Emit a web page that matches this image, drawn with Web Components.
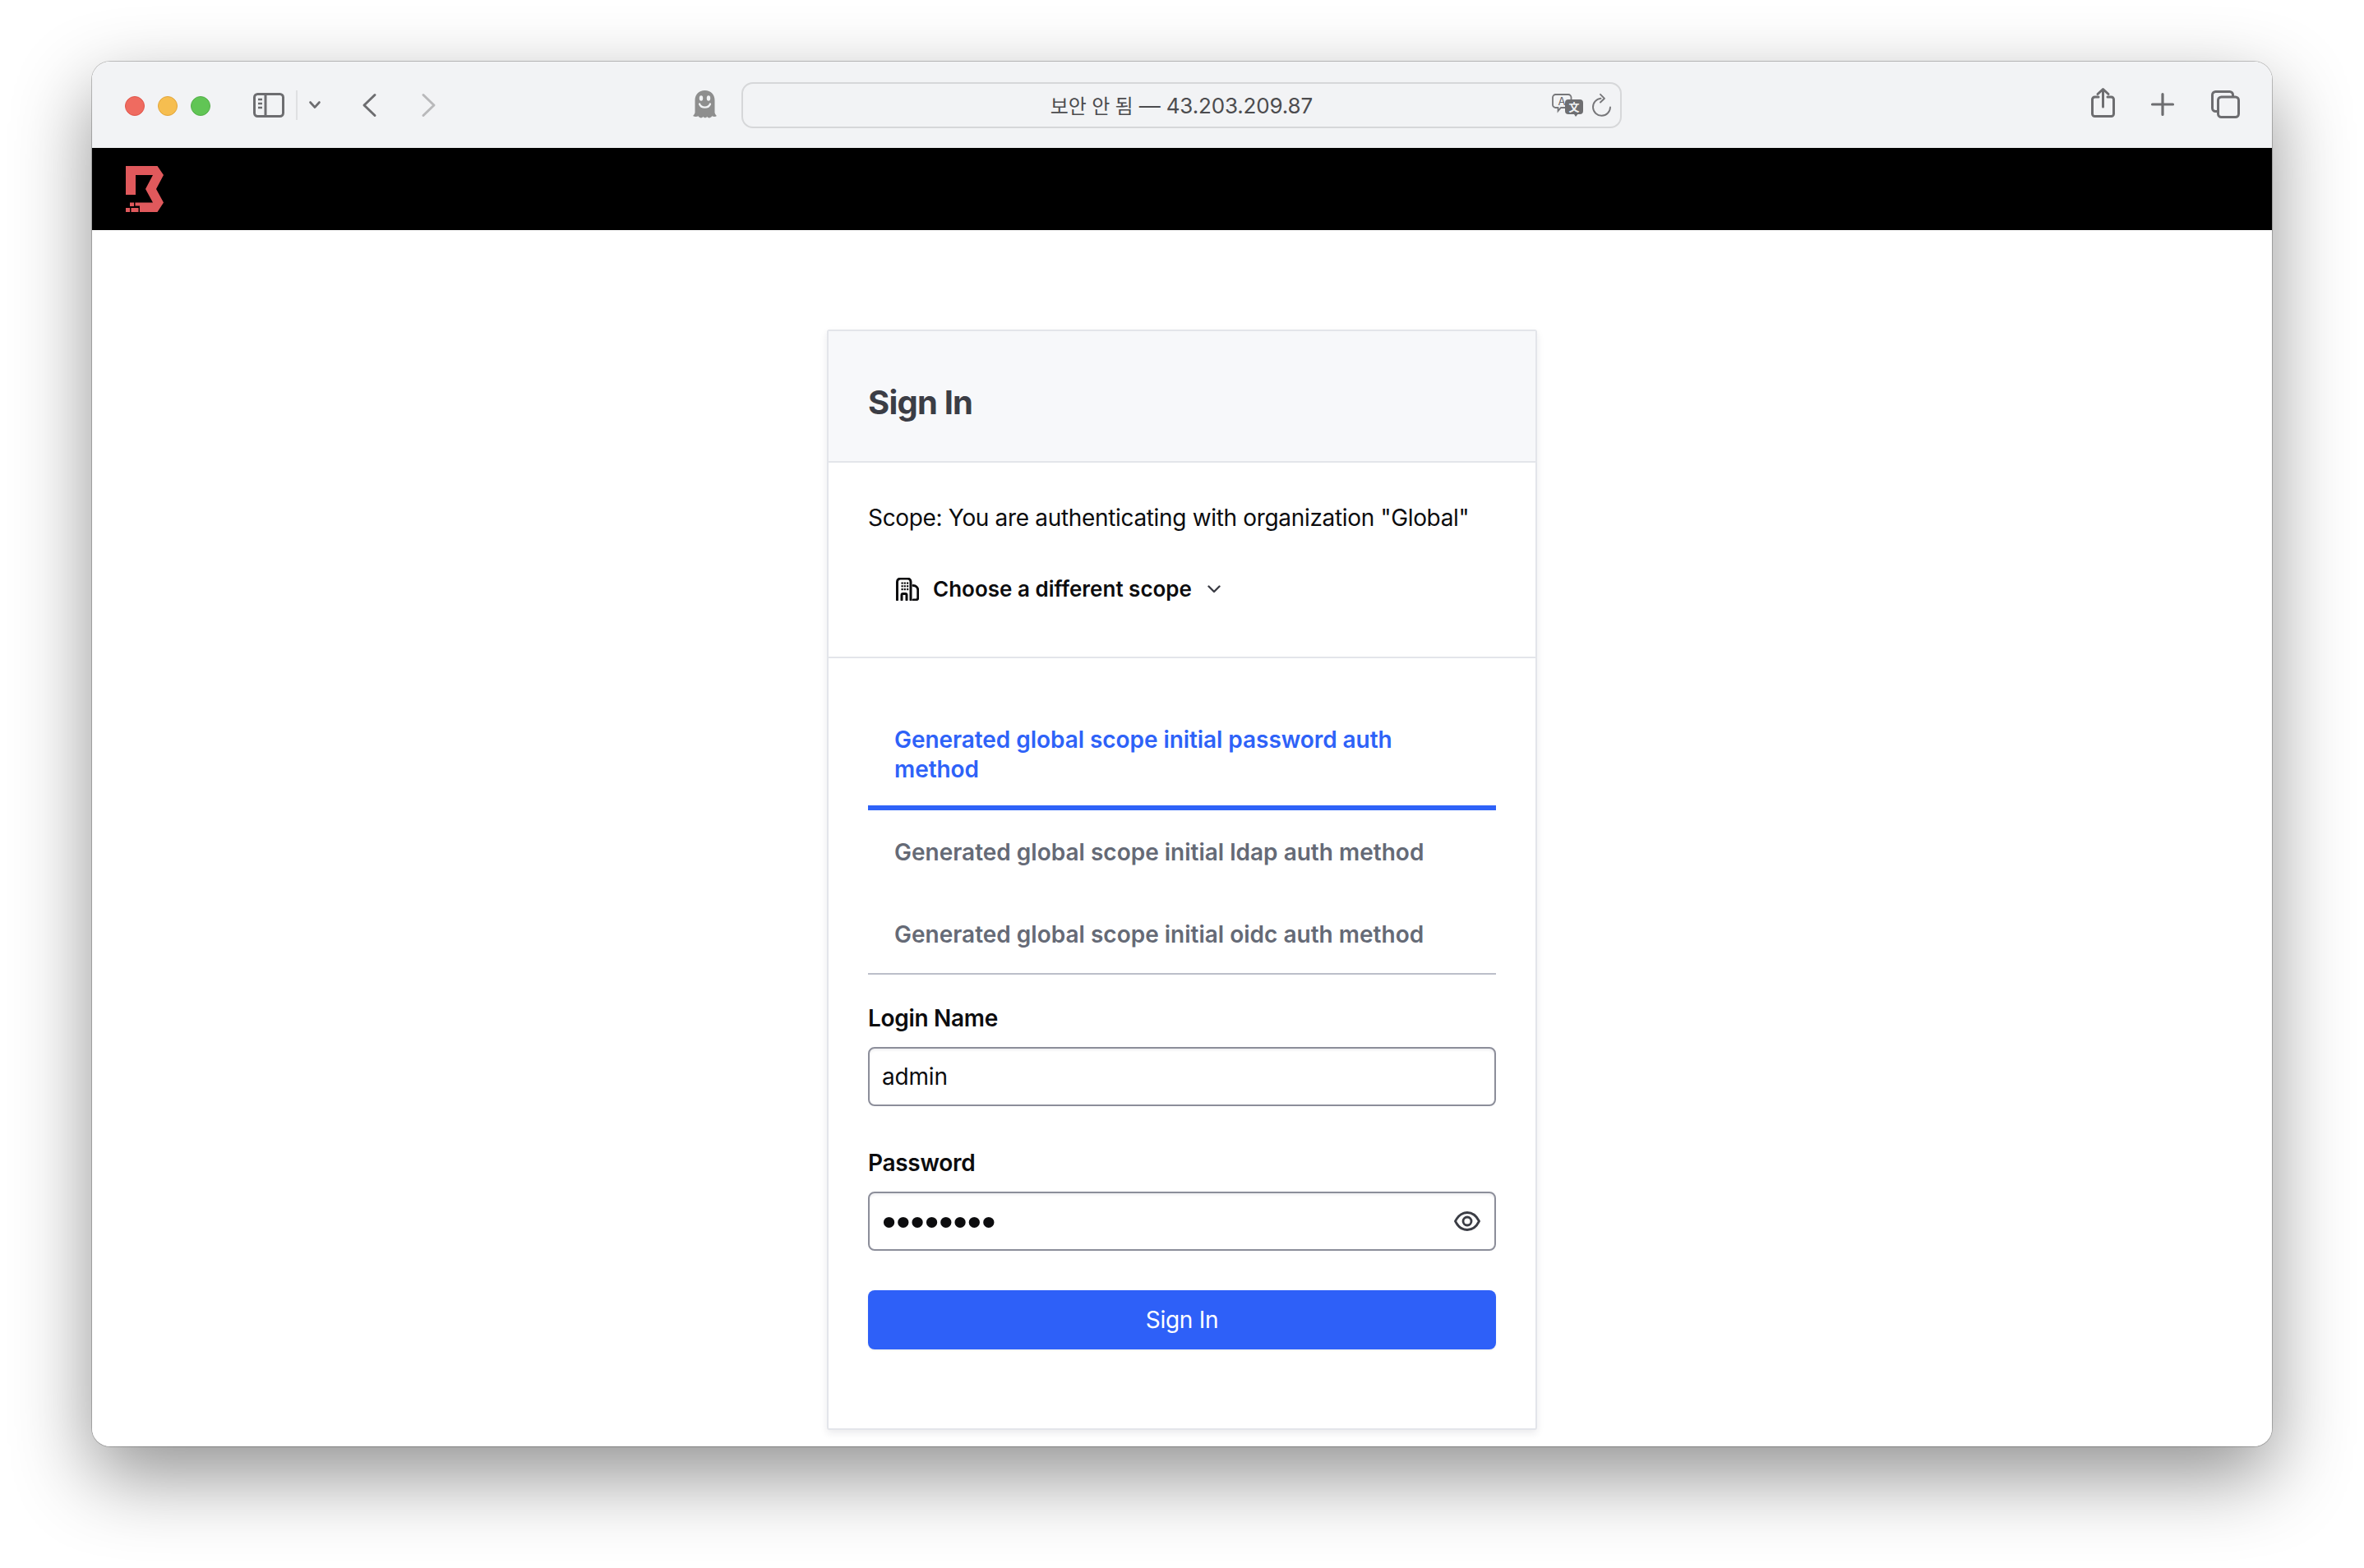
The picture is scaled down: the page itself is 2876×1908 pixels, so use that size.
<!doctype html>
<html lang="en">
<head>
<meta charset="utf-8">
<title>Sign In</title>
<style>
  html, body { margin: 0; background: #fff; }
  body { font-family: Inter, "Noto Sans CJK KR", sans-serif; }
</style>
</head>
<body>
<browser-window>
  <browser-toolbar slot="toolbar" notice="보안 안 됨" address="43.203.209.87"></browser-toolbar>
  <site-header slot="header"></site-header>
  <sign-in-card heading="Sign In">
    <scope-picker slot="scope" org="Global" label="Choose a different scope"></scope-picker>
    <auth-tabs slot="tabs">
      <auth-tab active>Generated global scope initial password auth method</auth-tab>
      <auth-tab>Generated global scope initial ldap auth method</auth-tab>
      <auth-tab>Generated global scope initial oidc auth method</auth-tab>
    </auth-tabs>
    <form-field label="Login Name">admin</form-field>
    <form-field label="Password" secret>••••••••</form-field>
    <submit-button>Sign In</submit-button>
  </sign-in-card>
</browser-window>

<script>
class BrowserWindow extends HTMLElement {
  constructor() {
    super()
    this.attachShadow({ mode: 'open' })
    this.shadowRoot.innerHTML = `
      <style>
        :host { display: block; padding: 75px 112px 148px; }
        .win {
          height: 1685px;
          border-radius: 22px;
          overflow: hidden;
          background: #fff;
        }
        .frame {
          border-radius: 22px;
          box-shadow: 0 0 0 1px rgba(0,0,0,.22), 0 36px 95px rgba(0,0,0,.43);
        }
        main { display: flex; justify-content: center; padding-top: 121px; }
      </style>
      <div class="frame">
        <div class="win">
          <slot name="toolbar"></slot>
          <slot name="header"></slot>
          <main><slot></slot></main>
        </div>
      </div>
    `
  }
}

class BrowserToolbar extends HTMLElement {
  constructor() {
    super()
    this.attachShadow({ mode: 'open' })
  }

  connectedCallback() {
    const notice = this.getAttribute('notice') ?? ''
    const address = this.getAttribute('address') ?? ''
    this.shadowRoot.innerHTML = `
      <style>
        :host {
          display: flex;
          align-items: center;
          height: 105px;
          box-sizing: border-box;
          background: #f2f3f5;
          padding: 0 39px 0 40px;
          color: #6d6d70;
        }
        svg { display: block; flex: none; overflow: visible; }
        .lights { display: flex; gap: 16px; margin-top: 3px; }
        .lights i { width: 24px; height: 24px; border-radius: 50%; box-sizing: border-box; border: 1px solid; }
        .red { background: #ef6b60; border-color: #e0554a !important; }
        .yellow { background: #f6be50; border-color: #e2a53a !important; }
        .green { background: #61c555; border-color: #53ad48 !important; }
        .sidebar { margin-left: 52px; }
        .sep { width: 2px; height: 36px; background: #dfe0e2; margin-left: 14px; }
        .drop { margin-left: 14px; }
        .back { margin-left: 51px; }
        .fwd { margin-left: 55px; color: #b9b9bb; }
        .ghost { margin-left: 313px; margin-bottom: 2px; }
        .address {
          flex: none;
          display: flex;
          align-items: center;
          justify-content: center;
          position: relative;
          width: 1071px;
          height: 56px;
          box-sizing: border-box;
          margin: 0 0 0 30px;
          border: 2px solid #d6d7d9;
          border-radius: 14px;
          font: 400 26px Inter, "Noto Sans CJK KR", sans-serif;
          color: #4c4c4f;
          letter-spacing: -.15px;
        }
        .notice { font-size: 24px; letter-spacing: -.2px; }
        .address-tools {
          position: absolute; right: 11px; top: 12px;
          display: flex; align-items: center; gap: 11px;
        }
        .end { margin-left: auto; margin-bottom: 2px; display: flex; align-items: center; gap: 45px; }
        .share { margin: 0 -1px 3px 0; }
        svg text { font-family: Inter, "Noto Sans CJK KR", sans-serif; }
      </style>
      <div class="lights"><i class="red"></i><i class="yellow"></i><i class="green"></i></div>

      <svg class="sidebar" width="38" height="30" viewBox="0 0 38 30" fill="none" stroke="currentColor" stroke-width="3">
        <rect x="1.500" y="1.500" width="35" height="27" rx="4"/>
        <path d="M15 1.500v27"/>
        <path d="M6 8h5M6 13h5M6 18h5" stroke-width="2.400"/>
      </svg>
      <div class="sep"></div>
      <svg class="drop" width="14" height="9" viewBox="0 0 14 9" fill="none" stroke="currentColor" stroke-width="2.600" stroke-linecap="round" stroke-linejoin="round">
        <path d="M1.500 1.500 7 7.500l5.500-6"/>
      </svg>
      <svg class="back" width="17" height="28" viewBox="0 0 17 28" fill="none" stroke="currentColor" stroke-width="3" stroke-linecap="round" stroke-linejoin="round">
        <path d="M15 1.500 2 14l13 12.500"/>
      </svg>
      <svg class="fwd" width="17" height="28" viewBox="0 0 17 28" fill="none" stroke="currentColor" stroke-width="3" stroke-linecap="round" stroke-linejoin="round">
        <path d="M2 1.500 15 14 2 26.500"/>
      </svg>

      <svg class="ghost" width="29" height="34" viewBox="0 0 29 34">
        <path fill="#8e8e8e" d="M14.500 0C7 0 2.500 5 2.500 12v14.500C2.500 28 1.500 29.500 0 31c2 1.300 4.500 1.300 6.500.3 1.500 2.400 4.500 2.900 6 .7 1.200 1.800 3.500 1.800 4.700 0 1.500 2.200 4.500 1.700 6-.7 2 1 4.300 1 5.800-.3-1.500-1.500-2.500-3-2.500-4.500V12C26.500 5 22 0 14.500 0Z"/>
        <ellipse cx="10" cy="9.500" rx="2.200" ry="3.200" fill="#f2f3f5"/>
        <ellipse cx="19" cy="9.500" rx="2.200" ry="3.200" fill="#f2f3f5"/>
        <path d="M8 16.500c2 5.500 11 5.500 13 0" fill="none" stroke="#f2f3f5" stroke-width="2.200" stroke-linecap="round"/>
      </svg>

      <div class="address">
        <span><span class="notice">${notice}</span> — ${address}</span>
        <div class="address-tools">
          <svg width="38" height="28" viewBox="0 0 38 28">
            <path d="M4.500 1h15.500a3.500 3.500 0 0 1 3.500 3.500v9a3.500 3.500 0 0 1-3.500 3.500H11l-3.500 4v-4h-3A3.500 3.500 0 0 1 1 13.500v-9A3.500 3.500 0 0 1 4.500 1Z" fill="#f2f3f5" stroke="#77777a" stroke-width="1.800"/>
            <text x="12" y="14" text-anchor="middle" font-size="13" fill="#666669">A</text>
            <path d="M20 7h14a4 4 0 0 1 4 4v10a4 4 0 0 1-4 4h-2.500L29 28l-2-3h-7a4 4 0 0 1-4-4V11a4 4 0 0 1 4-4Z" fill="#6e6e71"/>
            <text x="27" y="21" text-anchor="middle" font-size="13" font-weight="700" fill="#f2f3f5">文</text>
          </svg>
          <svg width="23" height="28" viewBox="0 0 23 28" fill="none" stroke="#77777a" stroke-width="1.900" stroke-linecap="round" stroke-linejoin="round">
            <path d="M10.500 5.800A10.500 10.500 0 1 0 22 16.500"/>
            <path d="M10 .8l5 5-5 4.700"/>
          </svg>
        </div>
      </div>

      <div class="end">
        <svg class="share" width="29" height="36" viewBox="0 0 29 36" fill="none" stroke="currentColor" stroke-width="3" stroke-linecap="round" stroke-linejoin="round">
          <path d="M9 11H4.500a3 3 0 0 0-3 3v17.500a3 3 0 0 0 3 3h20a3 3 0 0 0 3-3V14a3 3 0 0 0-3-3H20"/>
          <path d="M14.500 23V2M8 7.500 14.500 1.500 21 7.500"/>
        </svg>
        <svg width="28" height="28" viewBox="0 0 28 28" fill="none" stroke="currentColor" stroke-width="3.200" stroke-linecap="round">
          <path d="M14 1.500v25M1.500 14h25"/>
        </svg>
        <svg width="35" height="33" viewBox="0 0 35 33" fill="none" stroke="currentColor" stroke-width="3">
          <path d="M8 25.500H5.500a4 4 0 0 1-4-4v-16a4 4 0 0 1 4-4h17a4 4 0 0 1 4 4V8"/>
          <rect x="8.500" y="8" width="25" height="24.500" rx="4"/>
        </svg>
      </div>
    `
  }
}

class SiteHeader extends HTMLElement {
  constructor() {
    super()
    this.attachShadow({ mode: 'open' })
    this.shadowRoot.innerHTML = `
      <style>
        :host { display: flex; align-items: flex-start; height: 100px; background: #000; padding-left: 41px; }
        svg { display: block; margin-top: 22px; }
      </style>
      <svg width="46" height="56" viewBox="0 0 46 56" fill="#e0595c">
        <path d="M0 0H38.500L46 11 37 28 46 44.500 38.500 56H17V48.500H11.500V44.500H33L24 28 33 11H12V35H0Z"/>
        <rect x="5" y="44.500" width="5" height="4.500"/>
        <rect x="0" y="51" width="5" height="5"/>
        <rect x="6.500" y="51" width="9" height="5"/>
      </svg>
    `
  }
}

class SignInCard extends HTMLElement {
  constructor() {
    super()
    this.attachShadow({ mode: 'open' })
  }

  connectedCallback() {
    const heading = this.getAttribute('heading') ?? ''
    this.shadowRoot.innerHTML = `
      <style>
        :host {
          display: block;
          flex: none;
          width: 864px;
          box-sizing: border-box;
          border: 2px solid #e3e5ea;
          border-radius: 3px;
          background: #fff;
          box-shadow: 0 4px 10px rgba(30,35,60,.09);
          font-family: Inter, sans-serif;
        }
        header {
          background: #f7f8fa;
          height: 160px;
          box-sizing: border-box;
          display: flex;
          align-items: center;
          padding: 16px 48px 0;
          border-bottom: 2px solid #e3e5ea;
        }
        h1 { margin: 0; font: 700 40px/1 Inter, sans-serif; color: #3b3d45; letter-spacing: -.8px; }
        .auth { padding: 48px 48px 96px; }
      </style>
      <header><h1>${heading}</h1></header>
      <slot name="scope"></slot>
      <div class="auth">
        <slot name="tabs"></slot>
        <slot></slot>
      </div>
    `
  }
}

class ScopePicker extends HTMLElement {
  constructor() {
    super()
    this.attachShadow({ mode: 'open' })
  }

  connectedCallback() {
    const org = this.getAttribute('org') ?? ''
    const label = this.getAttribute('label') ?? ''
    this.shadowRoot.innerHTML = `
      <style>
        :host {
          display: block;
          padding: 47px 48px 62px;
          border-bottom: 2px solid #e3e5ea;
          font-family: Inter, sans-serif;
        }
        p { margin: 0 0 47px; font: 400 28px/40px Inter, sans-serif; color: #0c0c0e; letter-spacing: -.33px; }
        .pick { display: flex; align-items: center; padding-left: 34px; height: 40px;
          font: 600 26px/40px Inter, sans-serif; color: #0c0c0e; }
        .pick span { margin-left: 17px; }
        .caret { margin-left: 19px; }
        svg { display: block; flex: none; }
      </style>
      <p>Scope: You are authenticating with organization "${org}"</p>
      <div class="pick">
        <svg width="28" height="28" viewBox="0 0 28 28" fill="none" stroke="#0c0c0e" stroke-width="3" stroke-linecap="round" stroke-linejoin="round">
          <path d="M1.500 27V5a4 4 0 0 1 4-4h8.500a4 4 0 0 1 4 4v22"/>
          <path d="M7 27v-6a1.500 1.500 0 0 1 1.500-1.500h3A1.500 1.500 0 0 1 13 21v6"/>
          <path d="M21 9.500a6 6 0 0 1 5.800 5.500v9.500a2.500 2.500 0 0 1-2.500 2.500H21"/>
          <g fill="#0c0c0e" stroke="none">
            <rect x="6.500" y="5.500" width="2.200" height="2.200"/><rect x="9.700" y="5.500" width="2.200" height="2.200"/><rect x="13" y="5.500" width="2.200" height="2.200"/>
            <rect x="6.500" y="9.200" width="2.200" height="2.200"/><rect x="9.700" y="9.200" width="2.200" height="2.200"/><rect x="13" y="9.200" width="2.200" height="2.200"/>
            <rect x="6.500" y="13" width="2.200" height="2.200"/><rect x="9.700" y="13" width="2.200" height="2.200"/><rect x="13" y="13" width="2.200" height="2.200"/>
          </g>
        </svg>
        <span>${label}</span>
        <svg class="caret" width="16" height="10" viewBox="0 0 16 10" fill="none" stroke="#3b3d45" stroke-width="2.400" stroke-linecap="round" stroke-linejoin="round">
          <path d="M1.500 1.500 8 8l6.500-6.500"/>
        </svg>
      </div>
    `
  }
}

class AuthTabs extends HTMLElement {
  constructor() {
    super()
    this.attachShadow({ mode: 'open' })
    this.shadowRoot.innerHTML = `
      <style>
        :host { display: flex; flex-direction: column; border-bottom: 2px solid #bcbfc9; margin-bottom: 35px; }
      </style>
      <slot></slot>
    `
  }
}

class AuthTab extends HTMLElement {
  constructor() {
    super()
    this.attachShadow({ mode: 'open' })
    this.shadowRoot.innerHTML = `
      <style>
        :host {
          display: block;
          padding: 33px 32px 31px;
          font: 600 28px/36px Inter, sans-serif;
          color: #656a76;
        }
        :host(:last-child) { padding-bottom: 29px; }
        :host([active]) {
          padding-bottom: 26px;
          color: #2e62f8;
          letter-spacing: -.06px;
          border-bottom: 6px solid #2e62f8;
        }
      </style>
      <slot></slot>
    `
  }
}

class FormField extends HTMLElement {
  constructor() {
    super()
    this.attachShadow({ mode: 'open' })
  }

  connectedCallback() {
    const label = this.getAttribute('label') ?? ''
    const secret = this.hasAttribute('secret')
    this.shadowRoot.innerHTML = `
      <style>
        :host { display: block; margin-bottom: 51px; font-family: Inter, sans-serif; }
        label { display: block; font: 600 28px/36px Inter, sans-serif; letter-spacing: -.3px; color: #0c0c0e; margin-bottom: 17px; }
        .box {
          display: flex;
          align-items: center;
          height: 72px;
          box-sizing: border-box;
          padding: 0 16px 0 15px;
          border: 2px solid #8c8e9a;
          border-radius: 8px;
          box-shadow: inset 0 2px 3px rgba(30,35,60,.07);
          font: 400 28px/36px Inter, sans-serif;
          letter-spacing: -.2px;
          color: #0c0c0e;
        }
        .val { flex: 1; }
        .val.dots { font: 400 49px/36px "Liberation Sans", sans-serif; letter-spacing: .15px; }
        svg { display: block; flex: none; margin-right: 1px; }
      </style>
      <label>${label}</label>
      <div class="box">
        <span class="val ${secret ? 'dots' : ''}"><slot></slot></span>
        ${
          secret
            ? `<svg width="32" height="24" viewBox="0 0 32 24" fill="none" stroke="#3b3d45" stroke-width="2.800" stroke-linejoin="round">
                <path d="M1.500 12C5 5 10 1.500 16 1.500S27 5 30.500 12C27 19 22 22.500 16 22.500S5 19 1.500 12Z"/>
                <circle cx="16" cy="12" r="5"/>
              </svg>`
            : ``
        }
      </div>
    `
  }
}

class SubmitButton extends HTMLElement {
  constructor() {
    super()
    this.attachShadow({ mode: 'open' })
    this.shadowRoot.innerHTML = `
      <style>
        :host { display: block; margin-top: -3px; }
        button {
          display: block;
          width: 100%;
          height: 72px;
          border: 0;
          border-radius: 8px;
          background: #2e60f8;
          box-shadow: 0 1px 2px rgba(30,35,60,.1);
          color: #fff;
          font: 400 28px/36px Inter, sans-serif;
          letter-spacing: -.3px;
          padding: 0;
        }
      </style>
      <button type="button"><slot></slot></button>
    `
  }
}

customElements.define('browser-window', BrowserWindow)
customElements.define('browser-toolbar', BrowserToolbar)
customElements.define('site-header', SiteHeader)
customElements.define('sign-in-card', SignInCard)
customElements.define('scope-picker', ScopePicker)
customElements.define('auth-tabs', AuthTabs)
customElements.define('auth-tab', AuthTab)
customElements.define('form-field', FormField)
customElements.define('submit-button', SubmitButton)
</script>
</body>
</html>
